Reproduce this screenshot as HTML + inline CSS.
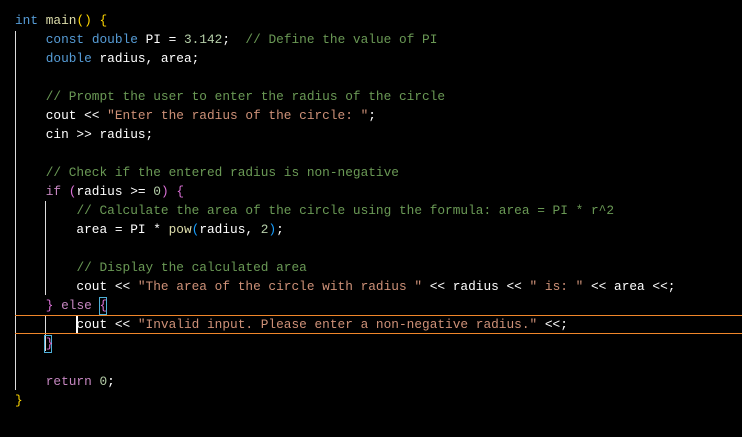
<!DOCTYPE html>
<html><head><style>
body{margin:0;background:#000;width:742px;height:437px;overflow:hidden;position:relative;font-family:"Liberation Mono",monospace;font-size:12.8px;color:#fff}
.l{position:absolute;left:15px;height:19px;line-height:19px;white-space:pre}
.k{color:#569cd6}.f{color:#dcdcaa}.y{color:#ffd700}.c{color:#6a9955}.s{color:#ce9178}.n{color:#b5cea8}.p{color:#c586c0}.o{color:#da70d6}.b{color:#179fff}
.g{position:absolute;width:1px;background:#ddd}
</style></head><body>
<div class="g" style="left:15px;top:31px;height:359px"></div>
<div class="g" style="left:45px;top:201px;height:94px"></div>
<div class="g" style="left:45px;top:315px;height:36px"></div>
<div style="position:absolute;left:15px;right:0;top:315px;height:17px;border-top:1px solid #f0862a;border-bottom:1px solid #f0862a"></div>
<div style="position:absolute;left:76px;top:316px;width:2px;height:17px;background:#fff"></div>
<div style="position:absolute;left:99px;top:297px;width:6px;height:16px;border:1px solid #4fb0d8"></div>
<div style="position:absolute;left:44px;top:335px;width:6px;height:16px;border:1px solid #4fb0d8"></div>
<div class="l" style="top:11px"><span class="k">int</span> <span class="f">main</span><span class="y">()</span> <span class="y">{</span></div>
<div class="l" style="top:30px">    <span class="k">const</span> <span class="k">double</span> PI = <span class="n">3.142</span>;  <span class="c">// Define the value of PI</span></div>
<div class="l" style="top:49px">    <span class="k">double</span> radius, area;</div>
<div class="l" style="top:87px">    <span class="c">// Prompt the user to enter the radius of the circle</span></div>
<div class="l" style="top:106px">    cout &lt;&lt; <span class="s">"Enter the radius of the circle: "</span>;</div>
<div class="l" style="top:125px">    cin &gt;&gt; radius;</div>
<div class="l" style="top:163px">    <span class="c">// Check if the entered radius is non-negative</span></div>
<div class="l" style="top:182px">    <span class="p">if</span> <span class="o">(</span>radius &gt;= <span class="n">0</span><span class="o">)</span> <span class="o">{</span></div>
<div class="l" style="top:201px">        <span class="c">// Calculate the area of the circle using the formula: area = PI * r^2</span></div>
<div class="l" style="top:220px">        area = PI * <span class="f">pow</span><span class="b">(</span>radius, <span class="n">2</span><span class="b">)</span>;</div>
<div class="l" style="top:258px">        <span class="c">// Display the calculated area</span></div>
<div class="l" style="top:277px">        cout &lt;&lt; <span class="s">"The area of the circle with radius "</span> &lt;&lt; radius &lt;&lt; <span class="s">" is: "</span> &lt;&lt; area &lt;&lt;;</div>
<div class="l" style="top:296px">    <span class="o">}</span> <span class="p">else</span> <span class="o">{</span></div>
<div class="l" style="top:315px">        cout &lt;&lt; <span class="s">"Invalid input. Please enter a non-negative radius."</span> &lt;&lt;;</div>
<div class="l" style="top:334px">    <span class="o">}</span></div>
<div class="l" style="top:372px">    <span class="p">return</span> <span class="n">0</span>;</div>
<div class="l" style="top:391px"><span class="y">}</span></div>
</body></html>
